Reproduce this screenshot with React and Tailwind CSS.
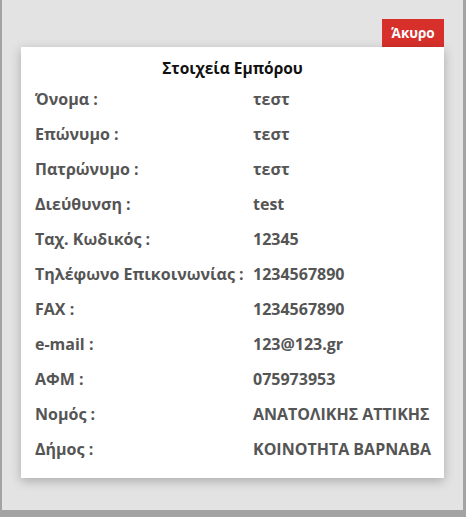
export default function App() {
    const rows = [
        ['Όνομα :', 'τεστ'],
        ['Επώνυμο :', 'τεστ'],
        ['Πατρώνυμο :', 'τεστ'],
        ['Διεύθυνση :', 'test'],
        ['Ταχ. Κωδικός :', '12345'],
        ['Τηλέφωνο Επικοινωνίας :', '1234567890'],
        ['FAX :', '1234567890'],
        ['e-mail :', '123@123.gr'],
        ['ΑΦΜ :', '075973953'],
        ['Νομός :', 'ΑΝΑΤΟΛΙΚΗΣ ΑΤΤΙΚΗΣ'],
        ['Δήμος :', 'ΚΟΙΝΟΤΗΤΑ ΒΑΡΝΑΒΑ'],
    ];

    return (
        <div className="w-[466px] h-[517px] bg-[#a3a3a3] overflow-hidden font-['Open_Sans',sans-serif]">
            <div className="ml-[2px] w-[461px] h-[510px] bg-[#e3e3e3] pt-[19px] pl-[19px]">
                <div className="w-[423px] flex flex-col">
                    {/* Cancel button */}
                    <div className="flex justify-end">
                        <button className="w-[62px] h-[28px] bg-[#d7302b] text-white text-[13.5px] font-bold">
                            Άκυρο
                        </button>
                    </div>

                    {/* Details card */}
                    <div className="bg-white shadow-[0_3px_10px_rgba(0,0,0,0.25)] pt-[10px] pb-[12px] pl-[14px]">
                        <h2 className="h-[24px] flex items-center justify-center text-[15.5px] font-bold text-[#111] pr-[14px]">
                            Στοιχεία Εμπόρου
                        </h2>
                        {rows.map(([label, value]) => (
                            <div key={label} className="h-[35px] flex items-center text-[16px] font-bold text-[#555]">
                                <span className="w-[218px] shrink-0 whitespace-nowrap">{label}</span>
                                <span className="whitespace-nowrap">{value}</span>
                            </div>
                        ))}
                    </div>
                </div>
            </div>
        </div>
    );
}
